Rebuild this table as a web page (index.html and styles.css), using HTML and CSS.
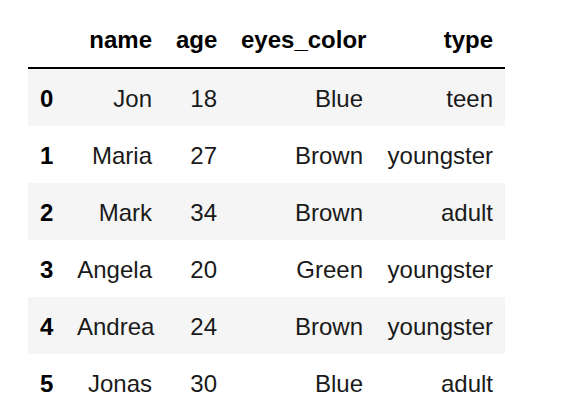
FILE: index.html
```html
<!DOCTYPE html>
<html>
<head>
<meta charset="utf-8">
<link rel="stylesheet" href="styles.css">
</head>
<body>
<table class="df">
  <colgroup>
    <col class="c-idx"><col class="c-name"><col class="c-age"><col class="c-eyes"><col class="c-type">
  </colgroup>
  <thead>
    <tr><th></th><th>name</th><th>age</th><th>eyes_color</th><th>type</th></tr>
  </thead>
  <tbody>
    <tr><th>0</th><td>Jon</td><td>18</td><td>Blue</td><td>teen</td></tr>
    <tr><th>1</th><td>Maria</td><td>27</td><td>Brown</td><td>youngster</td></tr>
    <tr><th>2</th><td>Mark</td><td>34</td><td>Brown</td><td>adult</td></tr>
    <tr><th>3</th><td>Angela</td><td>20</td><td>Green</td><td>youngster</td></tr>
    <tr><th>4</th><td>Andrea</td><td>24</td><td>Brown</td><td>youngster</td></tr>
    <tr><th>5</th><td>Jonas</td><td>30</td><td>Blue</td><td>adult</td></tr>
  </tbody>
</table>
</body>
</html>
```
FILE: styles.css
```css
html, body {
  margin: 0;
  background: #ffffff;
}
body {
  padding: 10px 0 0 28px;
  font-family: "Liberation Sans", Arial, sans-serif;
  font-size: 24px;
  color: #1a1a1a;
}
.df {
  border-collapse: collapse;
  border-spacing: 0;
  table-layout: fixed;
  width: 477px;
}
.c-idx { width: 37px; }
.c-name { width: 99px; }
.c-age { width: 65px; }
.c-eyes { width: 146px; }
.c-type { width: 130px; }
.df th, .df td {
  padding: 13px 12px 11px 12px;
  line-height: 33px;
  text-align: right;
  white-space: nowrap;
  font-weight: normal;
}
.df thead th {
  font-weight: bold;
  color: #000;
  border-bottom: 2px solid #000;
}
.df tbody th {
  font-weight: bold;
  text-align: left;
  color: #000;
}
.df tbody tr:nth-child(odd) {
  background: #f5f5f5;
}
```
